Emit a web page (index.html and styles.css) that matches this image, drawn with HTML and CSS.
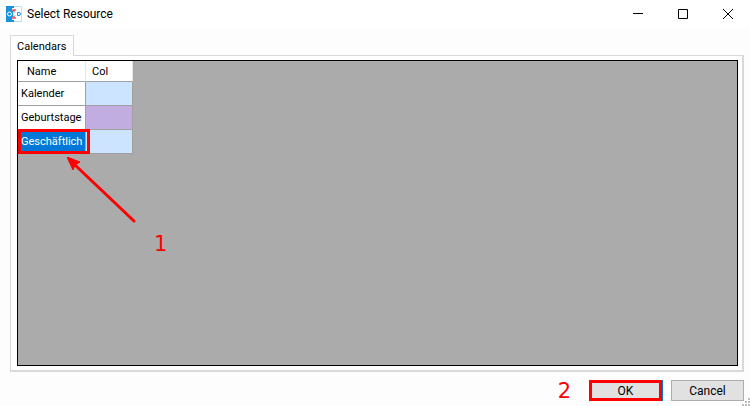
FILE: index.html
```
<!DOCTYPE html>
<html lang="en">
<head>
    <meta charset="UTF-8">
    <meta name="viewport" content="width=device-width, initial-scale=1.0">
    <title>Select Resource</title>
    <link rel="stylesheet" href="styles.css">
</head>
<body>
    <header class="titlebar">
        <svg class="app-icon" width="16" height="16" viewBox="0 0 16 16" aria-hidden="true">
            <rect x="0.5" y="0.5" width="15" height="15" fill="#fff" stroke="#b5e2fa"/>
            <path d="M0 0H8V2H6V5H7V11H6V14H8V16H0Z" fill="#1593dc"/>
            <ellipse cx="3.5" cy="8" rx="2" ry="2" fill="#1593dc" stroke="#fff" stroke-width="1"/>
            <path d="M9.5 6.5C6.5 5.5 6.5 10.5 9.5 9.5" fill="none" stroke="#9ad6f7"/>
            <path d="M11.5 6.5H13Q14.5 6.5 14.5 8T13 9.5H11.5Z" fill="none" stroke="#1593dc"/>
            <path d="M6 4H10M7 5H9M6 12H10M7 11H9" stroke="#e8101c"/>
        </svg>
        <h1 class="title">Select Resource</h1>
        <div class="window-controls">
            <button type="button" aria-label="Minimize"><svg width="12" height="12" viewBox="0 0 12 12"><path d="M1 5.5H11"/></svg></button>
            <button type="button" aria-label="Maximize"><svg width="12" height="12" viewBox="0 0 12 12"><path d="M1.5 1.5H10.5V10.5H1.5Z"/></svg></button>
            <button type="button" aria-label="Close"><svg width="12" height="12" viewBox="0 0 12 12"><path d="M1 1L11 11M11 1L1 11"/></svg></button>
        </div>
    </header>

    <main class="dialog">
        <div class="tabs" role="tablist">
            <button type="button" class="tab" role="tab" id="tab-calendars" aria-selected="true" aria-controls="calendars">Calendars</button>
        </div>
        <section class="tab-page" id="calendars" role="tabpanel" aria-labelledby="tab-calendars">
            <div class="grid-view">
                <table class="calendars">
                    <thead>
                        <tr><th class="name">Name</th><th class="color">Col</th></tr>
                    </thead>
                    <tbody>
                        <tr><td>Kalender</td><td class="blue"></td></tr>
                        <tr><td>Geburtstage</td><td class="purple"></td></tr>
                        <tr><td class="selected">Geschäftlich</td><td class="blue"></td></tr>
                    </tbody>
                </table>
                <svg class="arrow" width="72" height="70" viewBox="0 0 72 70" aria-hidden="true">
                    <path d="M8 8L67 64" stroke="#f00" stroke-width="3" stroke-linecap="round"/>
                    <path d="M0 0L13 5L8 8L6 13Z" fill="#f00" stroke="#f00"/>
                </svg>
                <span class="step step-one">1</span>
            </div>
        </section>
    </main>

    <footer class="actions">
        <span class="step">2</span>
        <button type="button" class="btn ok">OK</button>
        <button type="button" class="btn">Cancel</button>
        <svg class="grip" width="8" height="8" viewBox="0 0 8 8" aria-hidden="true">
            <path d="M6 0h2v2h-2zM3 3h2v2h-2zM6 3h2v2h-2zM0 6h2v2h-2zM3 6h2v2h-2zM6 6h2v2h-2z" fill="#bfbfbf"/>
        </svg>
    </footer>
</body>
</html>
```
FILE: styles.css
```
* {
    margin: 0;
    padding: 0;
    box-sizing: border-box;
}

body {
    display: flex;
    flex-direction: column;
    min-height: 100vh;
    background-color: #fdfdfd;
    color: #000000;
    font-family: Roboto, "Liberation Sans", Arial, sans-serif;
    font-size: 12px;
}

button {
    font: inherit;
    color: inherit;
}

/* Title bar */
.titlebar {
    display: flex;
    align-items: center;
    height: 27px;
    padding-left: 6px;
    background-color: #ffffff;
}

.title {
    margin-left: 5px;
    font-size: 12px;
    font-weight: normal;
}

.window-controls {
    display: flex;
    margin-left: auto;
}

.window-controls button {
    display: flex;
    align-items: center;
    justify-content: center;
    width: 45px;
    height: 27px;
    border: none;
    background: none;
}

.window-controls path {
    fill: none;
    stroke: #000000;
}

/* Tabs */
.dialog {
    display: flex;
    flex: 1;
    flex-direction: column;
    padding: 8px 6px 0 10px;
}

.tabs {
    display: flex;
}

.tab {
    position: relative;
    height: 21px;
    margin-bottom: -1px;
    padding: 0 7px 0 6px;
    border: 1px solid #d9d9d9;
    border-bottom: none;
    background-color: #ffffff;
    font-size: 11px;
}

.tab-page {
    display: flex;
    flex: 1;
    padding: 4px 4px 4px 6px;
    border: 1px solid #d9d9d9;
    border-right-width: 2px;
    border-bottom-width: 2px;
    background-color: #ffffff;
}

.grid-view {
    position: relative;
    flex: 1;
    border: 1px solid #000000;
    background-color: #ababab;
}

.calendars {
    border-collapse: separate;
    border-spacing: 0;
    background-color: #ffffff;
    font-size: 11px;
}

.calendars th {
    height: 21px;
    padding-left: 6px;
    border-right: 1px solid #e5e5e5;
    border-bottom: 1px solid #a0a0a0;
    font-weight: normal;
    text-align: left;
}

.calendars th.name {
    width: 68px;
    padding-left: 9px;
}

.calendars th.color {
    width: 47px;
}

.calendars td {
    height: 24px;
    padding-left: 3px;
    border-right: 1px solid #a0a0a0;
    border-bottom: 1px solid #a0a0a0;
}

.calendars td.blue {
    background-color: #cce4ff;
}

.calendars td.purple {
    background-color: #c2ade1;
}

.calendars td.selected {
    position: relative;
    background-color: #0078d7;
    color: #ffffff;
}

/* Red step markers */
.selected::after {
    content: "";
    position: absolute;
    inset: -1px -5px -1px 0;
    border: 3px solid #ff0000;
}

.arrow {
    position: absolute;
    top: 96px;
    left: 49px;
    fill: none;
}

.step {
    color: #ff0000;
    font-family: "DejaVu Sans", Verdana, sans-serif;
    font-size: 21px;
    line-height: 24px;
}

.step-one {
    position: absolute;
    top: 171px;
    left: 136px;
}

/* Buttons */
.actions {
    position: relative;
    display: flex;
    align-items: center;
    justify-content: flex-end;
    height: 34px;
    padding: 3px 6px 0 0;
}

.btn {
    width: 73px;
    height: 21px;
    margin-left: 9px;
    border: 1px solid #adadad;
    background-color: #e1e1e1;
}

.step + .btn {
    margin-left: 18px;
}

.btn.ok {
    border: 3px solid #ff0000;
    box-shadow: 1px 0 0 #0078d7;
}

.grip {
    position: absolute;
    right: 0;
    bottom: 0;
}
```
